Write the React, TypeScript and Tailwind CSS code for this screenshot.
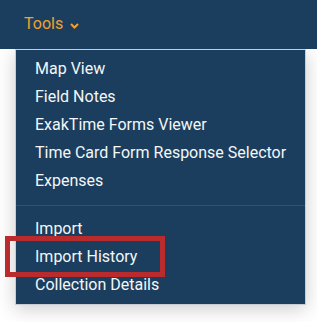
import React from "react";

const items1 = [
  "Map View",
  "Field Notes",
  "ExakTime Forms Viewer",
  "Time Card Form Response Selector",
  "Expenses",
];
const items2 = ["Import", "Import History", "Collection Details"];

export default function App() {
  return (
    <div
      className="relative w-[317px] h-[322px] bg-white overflow-hidden"
      style={{ fontFamily: "Roboto, 'Liberation Sans', sans-serif" }}
    >
      <div className="relative z-10 h-[49px] bg-[#1b3e5e] flex items-center pl-[24px]">
        <span className="text-[16px] text-[#f2a12e] leading-none mt-[-1px]">Tools</span>
        <svg className="ml-[7px] mt-[2px]" width="9" height="6" viewBox="0 0 9 6">
          <polyline
            points="1,1 4.5,4.5 8,1"
            fill="none"
            stroke="#f2a12e"
            strokeWidth="2"
          />
        </svg>
      </div>
      <div className="pl-[15px]">
        <div className="w-[291px] bg-[#1b3e5e] border border-[#c9ccd0] shadow-[0_4px_18px_rgba(0,0,0,0.2)] pt-[5px] pb-[5px]">
          {items1.map((t) => (
            <div
              key={t}
              className="h-[28px] flex items-center pl-[19px] text-[16px] text-[#f4f6f8] leading-none"
            >
              {t}
            </div>
          ))}
          <div className="mt-[10px] mb-[9px] h-px bg-[#2a5478]" />
          {items2.map((t) => (
            <div
              key={t}
              className="h-[28px] flex items-center pl-[19px] text-[16px] text-[#f4f6f8] leading-none"
            >
              {t}
            </div>
          ))}
        </div>
      </div>
      <div className="absolute left-[5px] top-[236px] w-[160px] h-[41px] border-[5px] border-[#b92b2c]" />
    </div>
  );
}
